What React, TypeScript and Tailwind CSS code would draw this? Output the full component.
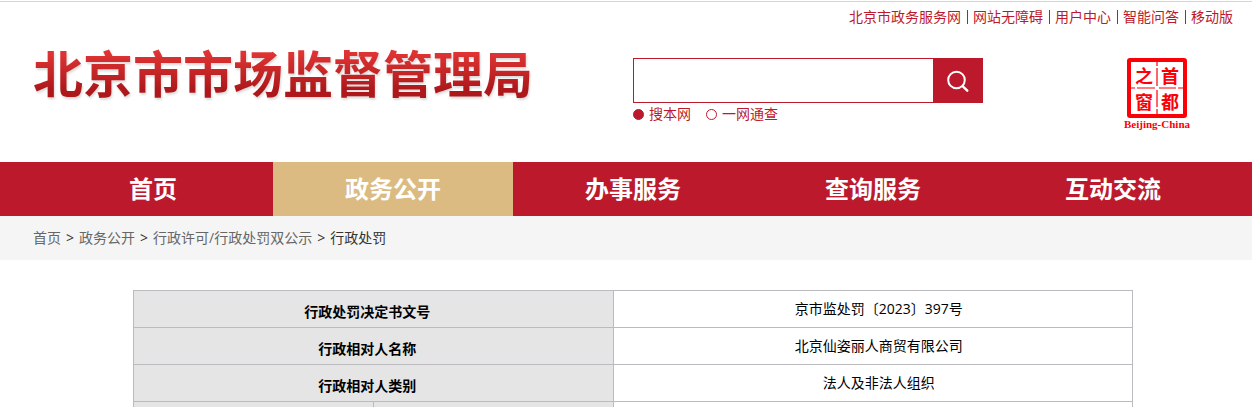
const topLinks = ['北京市政务服务网', '网站无障碍', '用户中心', '智能问答', '移动版'];

const navItems = ['首页', '政务公开', '办事服务', '查询服务', '互动交流'];

const crumbs = ['首页', '政务公开', '行政许可/行政处罚双公示'];

const records = [
  { label: '行政处罚决定书文号', value: '京市监处罚〔2023〕397号' },
  { label: '行政相对人名称', value: '北京仙姿丽人商贸有限公司' },
  { label: '行政相对人类别', value: '法人及非法人组织' },
];

function TopLinks() {
  return (
    <ul className="flex h-[30px] items-center justify-end text-sm leading-5 text-[#bc1a2c]">
      {topLinks.map((label, i) => (
        <li key={label} className="flex items-center">
          {i > 0 && <span className="mr-[5px] ml-1.5 h-3.5 w-px bg-[#c8143c]" />}
          <a href="#">{label}</a>
        </li>
      ))}
    </ul>
  );
}

function ScopeOption({ label, checked }: { label: string; checked?: boolean }) {
  return (
    <label className="flex items-center gap-[5px]">
      <input
        type="radio"
        name="scope"
        defaultChecked={checked}
        className="size-[11px] appearance-none rounded-full border border-[#bc1a2c] checked:bg-[#bc1a2c]"
      />
      {label}
    </label>
  );
}

function Search() {
  return (
    <form className="w-[350px] shrink-0" onSubmit={(e) => e.preventDefault()}>
      <div className="flex h-[45px]">
        <input
          type="text"
          aria-label="搜索"
          className="min-w-0 flex-1 border border-r-0 border-[#bc1a2c] bg-white px-3 text-sm outline-none"
        />
        <button
          type="submit"
          aria-label="搜索"
          className="flex w-[50px] items-center justify-center bg-[#bc1a2c]"
        >
          <svg width="24" height="24" viewBox="0 0 24 24" fill="none" stroke="#fff" strokeLinecap="round">
            <circle cx="10.5" cy="11" r="8.3" strokeWidth="2" />
            <path d="M16.8 17.3 L21.3 21.7" strokeWidth="2.4" />
          </svg>
        </button>
      </div>
      <div className="flex gap-[15px] text-sm leading-[22px] text-[#bc1a2c]">
        <ScopeOption label="搜本网" checked />
        <ScopeOption label="一网通查" />
      </div>
    </form>
  );
}

function Seal() {
  return (
    <a href="#" className="mr-[43px] flex shrink-0 flex-col items-center text-[#fb0007]">
      <span className="relative grid size-[60px] grid-cols-2 grid-rows-2 rounded-[3px] border-4 border-[#fb0007] text-center font-['Noto_Sans_CJK_SC',sans-serif] text-lg leading-[26px] font-bold">
        <span>之</span>
        <span>首</span>
        <span>窗</span>
        <span>都</span>
        <svg
          className="absolute inset-0 size-full"
          viewBox="0 0 52 52"
          fill="none"
          stroke="#fb0007"
          strokeWidth="1.2"
        >
          <path d="M0 26H4M6 26H24M28 26H45M47 26H52M26 0V4M26 6V24M26 28V45M26 47V52" />
        </svg>
      </span>
      <span className="font-['Liberation_Serif',serif] text-[11px] leading-[12px] font-bold">Beijing-China</span>
    </a>
  );
}

function Nav() {
  return (
    <nav className="bg-[#bc1a2c] pr-[19px] pl-[33px]">
      <ul className="flex">
        {navItems.map((label) => (
          <li key={label} className="flex-1">
            <a
              href="#"
              className={
                label === '政务公开'
                  ? 'block bg-[#dbbb82] text-center text-2xl leading-[54px] font-bold text-white'
                  : 'block text-center text-2xl leading-[54px] font-bold text-white'
              }
            >
              {label}
            </a>
          </li>
        ))}
      </ul>
    </nav>
  );
}

function Breadcrumb() {
  return (
    <div className="flex gap-[5px] bg-[#f5f5f5] pl-[33px] text-sm leading-[44px] text-[#333]">
      {crumbs.map((label) => (
        <span key={label} className="flex gap-[5px]">
          <a href="#" className="text-[#666]">
            {label}
          </a>
          <span>&gt;</span>
        </span>
      ))}
      <span>行政处罚</span>
    </div>
  );
}

function RecordTable() {
  return (
    <table className="mx-auto w-full max-w-[1000px] table-fixed border-collapse text-center text-sm leading-5 text-black">
      <colgroup>
        <col className="w-[24%]" />
        <col className="w-[24%]" />
        <col className="w-[52%]" />
      </colgroup>
      <tbody>
        {records.map((r) => (
          <tr key={r.label} className="h-[37px]">
            <th scope="row" colSpan={2} className="border border-[#bbbbbf] bg-[#e5e5e5] pt-1.5 pr-3 font-bold">
              {r.label}
            </th>
            <td className="border border-[#bbbbbf] pl-3">{r.value}</td>
          </tr>
        ))}
        <tr className="h-[37px]">
          <td className="border border-[#bbbbbf] bg-[#e5e5e5]" />
          <td className="border border-[#bbbbbf] bg-[#e5e5e5]" />
          <td className="border border-[#bbbbbf]" />
        </tr>
      </tbody>
    </table>
  );
}

export default function App() {
  return (
    <div className="h-screen overflow-hidden bg-white pt-px font-['Open_Sans','Noto_Sans_CJK_SC',sans-serif]">
      <header className="border-t border-[#d3d6d5] pr-[19px] pb-8 pl-[33px]">
        <TopLinks />
        <div className="flex items-start pt-[26px]">
          <h1 className="-mt-6 w-1/2 bg-linear-to-b from-[#e03434] from-25% to-[#ae181b] to-75% bg-clip-text font-['Noto_Sans_CJK_SC',sans-serif] text-[50px] leading-[74px] font-bold whitespace-nowrap text-transparent drop-shadow-[1px_2px_1px_rgba(0,0,0,0.15)]">
            北京市市场监督管理局
          </h1>
          <Search />
          <div className="flex-1" />
          <Seal />
        </div>
      </header>
      <Nav />
      <Breadcrumb />
      <main className="pt-[30px] pr-[19px] pl-[33px]">
        <RecordTable />
      </main>
    </div>
  );
}
